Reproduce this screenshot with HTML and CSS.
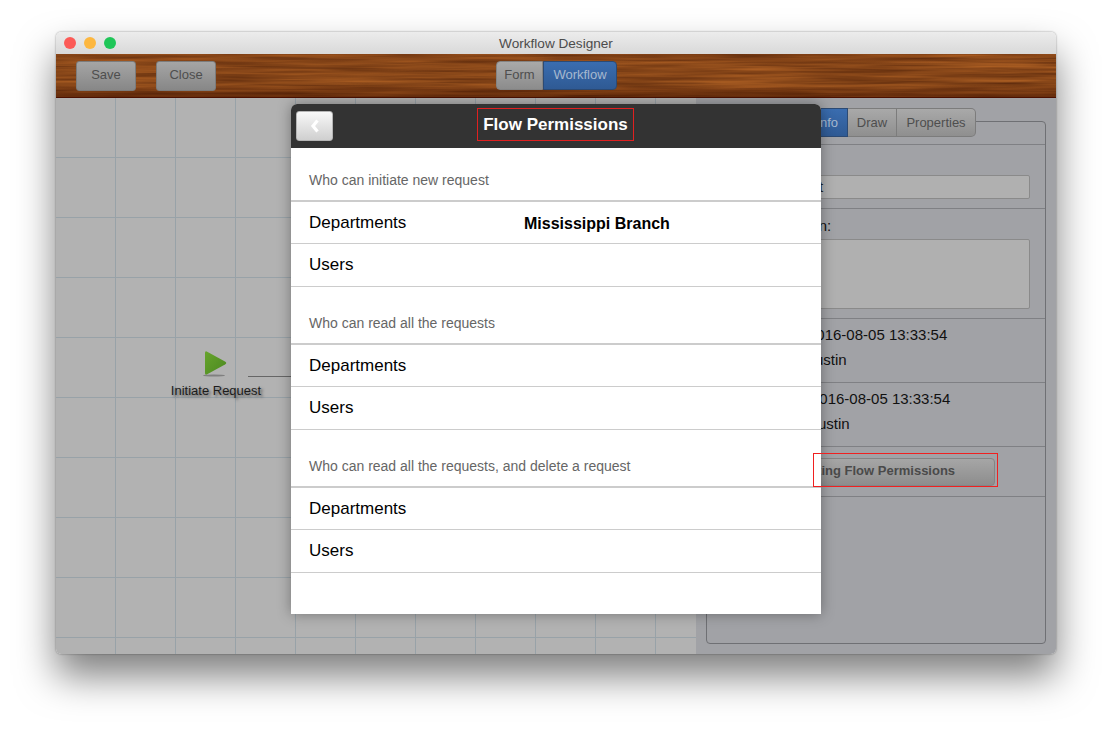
FILE: index.html
```html
<!DOCTYPE html>
<html lang="en">
<head>
<meta charset="utf-8">
<title>Workflow Designer</title>
<link rel="stylesheet" href="styles.css">
</head>
<body>
<div class="window">
  <header class="titlebar">
    <span class="light red"></span><span class="light yellow"></span><span class="light green"></span>
    <span class="window-title">Workflow Designer</span>
  </header>
  <div class="toolbar">
    <svg class="wood" width="1000" height="44" aria-hidden="true">
      <filter id="grain" x="0" y="0" width="100%" height="100%" color-interpolation-filters="sRGB">
        <feTurbulence type="fractalNoise" baseFrequency="0.008 0.26" numOctaves="3" seed="7"/>
        <feColorMatrix type="matrix" values="0.42 0 0 0 0.32  0.28 0 0 0 0.135  0.12 0 0 0 0.035  0 0 0 0 1"/>
      </filter>
      <rect width="1000" height="44" filter="url(#grain)"/>
    </svg>
    <div class="tool-left">
      <button class="tool-btn">Save</button>
      <button class="tool-btn">Close</button>
    </div>
    <div class="segment">
      <span class="seg seg-off">Form</span><span class="seg seg-on">Workflow</span>
    </div>
  </div>
  <main class="content">
    <section class="canvas">
      <div class="node">
        <svg class="node-icon" width="26" height="28" viewBox="0 0 26 28" aria-hidden="true">
          <defs>
            <linearGradient id="play" x1="0" y1="0" x2="1" y2="1">
              <stop offset="0" stop-color="#67a42c"/>
              <stop offset="1" stop-color="#4b8820"/>
            </linearGradient>
          </defs>
          <ellipse cx="11" cy="25.500" rx="11" ry="1" fill="#808080"/>
          <path d="M2 3Q2 .5 4.200 1.700L22 11.500Q24.500 13 22 14.500L4.200 24.300Q2 25.500 2 23Z" fill="url(#play)"/>
        </svg>
        <span class="node-label">Initiate Request</span>
      </div>
      <div class="edge"></div>
    </section>
    <aside class="side">
      <nav class="tabs">
        <span class="tab tab-on">Basic Info</span><span class="tab">Draw</span><span class="tab tab-end">Properties</span>
      </nav>
      <div class="box">
        <div class="box-head"></div>
        <div class="sec sec-name">
          <div class="field">Initiate Request</div>
        </div>
        <div class="sec sec-desc">
          <label class="lbl">Description:</label>
          <div class="area"></div>
        </div>
        <div class="sec sec-meta">
          <p class="meta-line"><span class="meta-key one">Created time:</span>2016-08-05 13:33:54</p>
          <p class="meta-line"><span class="meta-key one">Created by:</span><span class="who">Austin</span></p>
        </div>
        <div class="sec sec-meta">
          <p class="meta-line"><span class="meta-key two">Modified time:</span>2016-08-05 13:33:54</p>
          <p class="meta-line"><span class="meta-key two">Modified by:</span><span class="who">Austin</span></p>
        </div>
        <div class="sec sec-act">
          <button class="perm-btn">Setting Flow Permissions</button>
        </div>
      </div>
    </aside>
  </main>
  <div class="modal">
    <div class="modal-head">
      <button class="back" aria-label="Back">
        <svg width="10" height="14" viewBox="0 0 10 14" aria-hidden="true"><path d="M7.500 1.500L3 7l4.500 5.500" fill="none" stroke="#fff" stroke-width="3.200"/></svg>
      </button>
      <h1 class="modal-title">Flow Permissions</h1>
    </div>
    <div class="modal-body">
      <section class="group first">
        <h2 class="group-label">Who can initiate new request</h2>
        <div class="row"><span class="row-name">Departments</span><span class="row-val">Mississippi Branch</span></div>
        <div class="row"><span class="row-name">Users</span></div>
      </section>
      <section class="group">
        <h2 class="group-label">Who can read all the requests</h2>
        <div class="row"><span class="row-name">Departments</span></div>
        <div class="row"><span class="row-name">Users</span></div>
      </section>
      <section class="group">
        <h2 class="group-label">Who can read all the requests, and delete a request</h2>
        <div class="row"><span class="row-name">Departments</span></div>
        <div class="row"><span class="row-name">Users</span></div>
      </section>
    </div>
  </div>
  <div class="highlight hl-btn"></div>
</div>
</body>
</html>
```
FILE: styles.css
```css
* { box-sizing: border-box; }
html, body { margin: 0; height: 100%; background: #fff; overflow: hidden; }
body { font-family: "Liberation Sans", Arial, sans-serif; padding: 32px 56px 0; }

.window {
  position: relative;
  width: 1000px;
  height: 622px;
  display: flex;
  flex-direction: column;
  border-radius: 5px;
  box-shadow: 0 22px 38px rgba(0,0,0,.5), 0 0 2px rgba(0,0,0,.45);
}

.titlebar {
  position: relative;
  height: 22px;
  flex: none;
  display: flex;
  align-items: center;
  gap: 8px;
  padding-left: 8px;
  background: linear-gradient(#ececec, #d9d9d9);
  border-radius: 5px 5px 0 0;
}
.light { width: 12px; height: 12px; border-radius: 50%; }
.red { background: #fc5a56; }
.yellow { background: #fdb73f; }
.green { background: #1fc658; }
.window-title {
  position: absolute;
  left: 0; right: 0; top: 4px;
  text-align: center;
  font-size: 13.600px;
  line-height: 16px;
  color: #4c4c4c;
}

.toolbar {
  position: relative;
  height: 44px;
  flex: none;
  overflow: hidden;
  display: flex;
  padding: 7px 0 0 20px;
  background: #7c3f14;
}
.toolbar::after {
  content: "";
  position: absolute;
  inset: 0;
  background: linear-gradient(rgba(90,30,0,.1) 0, rgba(0,0,0,0) 25%, rgba(0,0,0,0) 70%, rgba(70,20,0,.5) 97%, #4c1000 97%);
}
.wood { position: absolute; left: 0; top: 0; display: block; }
.tool-left { position: relative; z-index: 1; display: flex; gap: 20px; }
.tool-btn {
  width: 60px;
  height: 30px;
  padding: 0 0 4px;
  border: 1px solid #7c7c7c;
  border-radius: 3px;
  background: linear-gradient(#a5a5a5, #878787);
  color: #4e4e4e;
  font: 13px "Liberation Sans", Arial, sans-serif;
}
.segment {
  position: relative;
  z-index: 1;
  display: flex;
  margin-left: 280px;
  height: 29px;
  font-size: 13px;
  line-height: 26px;
}
.seg { display: block; text-align: center; border: 1px solid; }
.seg-off {
  width: 47px;
  color: #4e4e4e;
  background: linear-gradient(#a9a9a9, #8c8c8c);
  border-color: #848484;
  border-radius: 4px 0 0 4px;
}
.seg-on {
  width: 74px;
  color: #a6b8cf;
  background: linear-gradient(#3a6db0, #2f5a94);
  border-color: #2c4a74;
  border-radius: 0 4px 4px 0;
}

.content { flex: 1; display: flex; min-height: 0; border-radius: 0 0 5px 5px; overflow: hidden; }

.canvas {
  position: relative;
  width: 640px;
  flex: none;
  background-color: #b2b2b2;
  background-image:
    linear-gradient(to right, transparent 59px, #98a2a8 59px),
    linear-gradient(to bottom, transparent 59px, #98a2a8 59px);
  background-size: 60px 60px;
}
.node {
  position: absolute;
  left: 110px;
  top: 252px;
  width: 100px;
  display: flex;
  flex-direction: column;
  align-items: center;
}
.node-icon { display: block; margin-left: -1px; }
.node-label {
  margin-top: 6px;
  font-size: 13px;
  line-height: 14px;
  color: #1c1c1c;
  white-space: nowrap;
  text-shadow: 2px 2px 3px rgba(0,0,0,.5);
}
.edge { position: absolute; left: 192px; top: 278px; width: 60px; height: 1px; background: #666; }

.side {
  flex: 1;
  padding: 10px;
  background: #a1a2a6;
  display: flex;
  flex-direction: column;
}
.tabs {
  position: relative;
  z-index: 1;
  display: flex;
  justify-content: flex-end;
  height: 29px;
  margin: 0 70px -16px 0;
  font-size: 13px;
  line-height: 27px;
}
.tab {
  display: block;
  width: 49px;
  text-align: center;
  color: #4e4e4e;
  background: linear-gradient(#a9a9a9, #8f8f8f);
  border: 1px solid #7c7c7c;
  border-left: 0;
}
.tab-on {
  width: 90px;
  padding-left: 14px;
  color: #a6b8cf;
  background: linear-gradient(#3a6db0, #2f5a94);
  border-color: #2c4a74;
}
.tab-end { width: 79px; border-radius: 0 5px 5px 0; }

.box {
  flex: 1;
  display: flex;
  flex-direction: column;
  border: 1px solid #6f7074;
  border-radius: 4px;
}
.box-head { height: 23px; flex: none; border-bottom: 1px solid #7f8084; }
.sec { flex: none; border-bottom: 1px solid #7f8084; padding: 0 15px 0 11px; color: #111; }
.sec-name { height: 64px; padding-top: 30px; }
.sec-desc { height: 110px; padding-top: 8px; }
.sec-meta { height: 64px; padding-top: 3px; }
.sec-act { height: 50px; padding-top: 11px; display: flex; justify-content: flex-end; padding-right: 50px; }
.lbl { display: block; padding-left: 34px; font-size: 15px; line-height: 17px; }
.field {
  height: 24px;
  border: 1px solid #8a8a8a;
  border-radius: 2px;
  background: #b0b0b0;
  font-size: 15px;
  line-height: 22px;
  color: #222;
}
.area {
  height: 70px;
  margin-top: 5px;
  border: 1px solid #8a8a8a;
  border-radius: 2px;
  background: #b0b0b0;
}
.meta-line { margin: 0; font-size: 15px; line-height: 25px; white-space: nowrap; }
.meta-key { display: inline-block; }
.meta-key.one { width: 90px; }
.meta-key.two { width: 93px; }
.who { margin-left: -3px; }
.perm-btn {
  width: 238px;
  height: 28px;
  padding: 0 0 4px;
  border: 1px solid #848484;
  border-radius: 4px;
  background: linear-gradient(#a6a6a6, #8d8d8d);
  color: #4a4a4a;
  font: bold 13px "Liberation Sans", Arial, sans-serif;
}

.modal {
  position: absolute;
  left: 235px;
  top: 72px;
  width: 530px;
  height: 510px;
  z-index: 2;
  background: #fff;
  border-radius: 6px 6px 0 0;
  box-shadow: 0 0 14px rgba(0,0,0,.35);
}
.modal-head {
  position: relative;
  height: 44px;
  background: #333;
  border-radius: 6px 6px 0 0;
  display: flex;
  justify-content: center;
  padding-top: 4px;
}
.back {
  position: absolute;
  left: 5px;
  top: 7px;
  width: 37px;
  height: 30px;
  padding: 0;
  border: 1px solid #b5b5b5;
  border-radius: 3px;
  background: linear-gradient(#f8f8f8, #cfcfcf);
  display: flex;
  align-items: center;
  justify-content: center;
}
.modal-title {
  margin: 0 0 0 -1px;
  width: 157px;
  height: 33px;
  border: 1px solid #e02020;
  font-size: 17px;
  font-weight: bold;
  line-height: 31px;
  text-align: center;
  color: #fff;
}
.group-label {
  margin: 0;
  padding: 28px 0 0 18px;
  height: 56px;
  font-size: 14px;
  font-weight: normal;
  line-height: 17px;
  color: #666;
}
.first .group-label { height: 52px; padding-top: 24px; }
.row {
  height: 43px;
  display: flex;
  padding-left: 18px;
  border-bottom: 1px solid #ccc;
  font-size: 17px;
  line-height: 42px;
  color: #000;
}
.row:nth-of-type(1) { height: 44px; border-top: 2px solid #ccc; }
.row-name { width: 215px; flex: none; }
.row-val { font-size: 16px; font-weight: bold; line-height: 44px; }

.highlight { position: absolute; z-index: 3; pointer-events: none; border: 1px solid #f02020; }
.hl-btn { left: 757px; top: 421px; width: 185px; height: 34px; }
```
